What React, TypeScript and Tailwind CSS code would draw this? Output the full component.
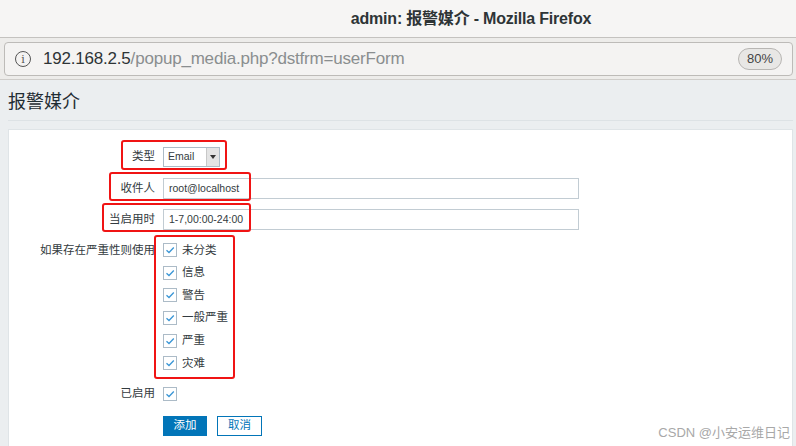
import React from "react";

const cjk = "font-['Liberation_Sans','Noto_Sans_CJK_SC',sans-serif]";

const Check = ({ checked = true }: { checked?: boolean }) => (
    <span className="w-[14px] h-[14px] bg-white border border-[#acbbc7] flex items-center justify-center shrink-0">
        {checked && (
            <svg width="10" height="8" viewBox="0 0 10 8">
                <path d="M1.5 4.2 L4 6.5 L8.8 1.5" fill="none" stroke="#3a96d6" strokeWidth="1.3" />
            </svg>
        )}
    </span>
);

const severities = ["未分类", "信息", "警告", "一般严重", "严重", "灾难"];

const App = () => {
    return (
        <div className={`relative w-[796px] h-[446px] overflow-hidden bg-white ${cjk}`}>
            {/* window title */}
            <div className="h-[38px] bg-[#f6f5f4] border-b border-[#c4c2bf] flex items-center justify-center pl-[146px]">
                <span className="text-[16px] font-bold text-[#2e3436] tracking-[-0.2px]">admin: 报警媒介 - Mozilla Firefox</span>
            </div>

            {/* address bar */}
            <div className="h-[42px] bg-[#edecea] border-b border-[#cfcdca] pl-[4px] pr-[3px] pt-[4px]">
                <div className="h-[34px] bg-[#f4f3f2] border border-[#bdbbb8] rounded-[4px] flex items-center pl-[10px] pr-[10px]">
                    <span className="w-[16px] h-[16px] rounded-full border border-[#555] text-[11px] leading-none flex items-center justify-center text-[#555] font-['DejaVu_Serif',serif]">i</span>
                    <span className="ml-[12px] text-[17px] text-[#2e3436] tracking-[-0.2px]">
                        192.168.2.5<span className="text-[#8a8e8f]">/popup_media.php?dstfrm=userForm</span>
                    </span>
                    <span className="ml-auto h-[22px] px-[8px] rounded-full border border-[#b8b6b3] bg-[#e8e7e5] text-[13px] text-[#444] flex items-center">80%</span>
                </div>
            </div>

            {/* page */}
            <div className="bg-[#ebeef0] h-full pl-[8px] pr-[3px]">
                <div className="h-[41px] pt-[5px] flex items-center border-b border-[#dde2e5]">
                    <h1 className="text-[18px] text-[#1f2c33]">报警媒介</h1>
                </div>
                <div className="h-[8px]" />
                <div className="bg-white border border-[#dfe4e7] h-full pt-[17px] text-[11px] text-[#333b40]">
                    <div className="flex items-center h-[20px]">
                        <div className="w-[146px] text-right text-[11.5px]">类型</div>
                        <div className="ml-[8px] w-[57px] h-[20px] border border-[#acbbc7] flex items-center">
                            <span className="pl-[4px] flex-1 text-[10.5px]">Email</span>
                            <span className="w-[13px] h-full bg-[#e4e4e4] border-l border-[#c8c8c8] flex items-center justify-center">
                                <svg width="6" height="4" viewBox="0 0 6 4"><path d="M0 0 H6 L3 4 Z" fill="#333" /></svg>
                            </span>
                        </div>
                    </div>
                    <div className="flex items-center h-[21px] mt-[11px]">
                        <div className="w-[146px] text-right text-[11.5px]">收件人</div>
                        <div className="ml-[8px] w-[416px] h-[21px] border border-[#c2ccd3] flex items-center pl-[5px] text-[10.5px]">root@localhost</div>
                    </div>
                    <div className="flex items-center h-[21px] mt-[10px]">
                        <div className="w-[146px] text-right text-[11.5px]">当启用时</div>
                        <div className="ml-[8px] w-[416px] h-[21px] border border-[#c2ccd3] flex items-center pl-[5px] text-[10.5px]">1-7,00:00-24:00</div>
                    </div>
                    <div className="flex mt-[9px]">
                        <div className="w-[146px] text-right text-[11.5px] h-[22.6px] flex items-center justify-end">如果存在严重性则使用</div>
                        <div className="ml-[8px] flex flex-col">
                            {severities.map((s) => (
                                <div key={s} className="h-[22.6px] flex items-center gap-[5px]">
                                    <Check />
                                    <span className="text-[11.5px]">{s}</span>
                                </div>
                            ))}
                        </div>
                    </div>
                    <div className="flex items-center h-[22px] mt-[8px]">
                        <div className="w-[146px] text-right text-[11.5px]">已启用</div>
                        <div className="ml-[8px]"><Check /></div>
                    </div>
                    <div className="flex items-center h-[20px] mt-[11px] pl-[154px] gap-[10px]">
                        <button className="w-[44px] h-[20px] bg-[#0275b8] border border-[#0275b8] text-white text-[11.5px]">添加</button>
                        <button className="w-[45px] h-[20px] bg-white border border-[#0275b8] text-[#0275b8] text-[11.5px]">取消</button>
                    </div>
                </div>
            </div>

            {/* red annotation boxes */}
            <div className="absolute left-[121px] top-[140px] w-[106px] h-[30px] border-2 border-[#f01414] rounded-[3px]" />
            <div className="absolute left-[109px] top-[172px] w-[142px] h-[29px] border-2 border-[#f01414] rounded-[3px]" />
            <div className="absolute left-[102px] top-[203px] w-[149px] h-[29px] border-2 border-[#f01414] rounded-[3px]" />
            <div className="absolute left-[154px] top-[235px] w-[81px] h-[144px] border-2 border-[#f01414] rounded-[3px]" />

            <div className="absolute right-[6px] bottom-[4px] text-[13px] text-[#a8a8a8]">CSDN @小安运维日记</div>
        </div>
    );
};

export default App;
